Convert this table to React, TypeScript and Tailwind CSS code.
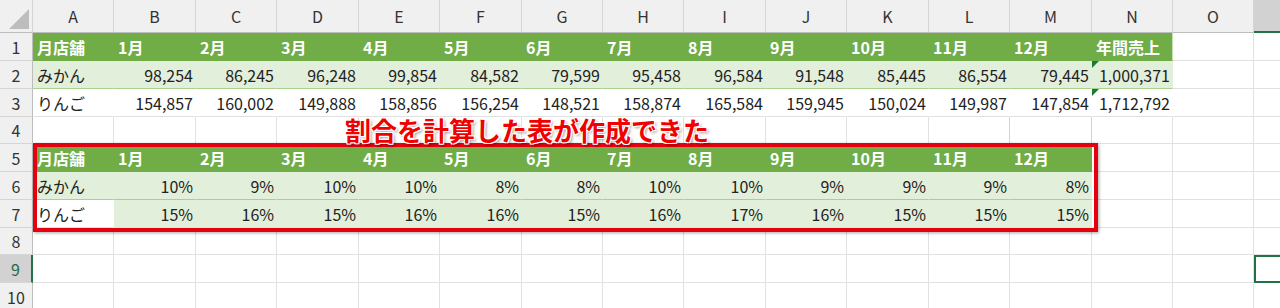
import React from 'react';

const letters = ['A', 'B', 'C', 'D', 'E', 'F', 'G', 'H', 'I', 'J', 'K', 'L', 'M', 'N', 'O', 'P'];
const months = ['1月', '2月', '3月', '4月', '5月', '6月', '7月', '8月', '9月', '10月', '11月', '12月'];

const mikan = ['98,254', '86,245', '96,248', '99,854', '84,582', '79,599', '95,458', '96,584', '91,548', '85,445', '86,554', '79,445'];
const ringo = ['154,857', '160,002', '149,888', '158,856', '156,254', '148,521', '158,874', '165,584', '159,945', '150,024', '149,987', '147,854'];
const mikanPct = ['10%', '9%', '10%', '10%', '8%', '8%', '10%', '10%', '9%', '9%', '9%', '8%'];
const ringoPct = ['15%', '16%', '15%', '16%', '16%', '15%', '16%', '17%', '16%', '15%', '15%', '15%'];

type Cell = { text?: string; kind: 'plain' | 'head' | 'light' | 'white'; right?: boolean; flag?: boolean };

// r = 1..10, c = 0..15 (A..P)
const getCell = (r: number, c: number): Cell => {
    if (r === 1) {
        if (c === 0) return { text: '月店舗', kind: 'head' };
        if (c <= 12) return { text: months[c - 1], kind: 'head' };
        if (c === 13) return { text: '年間売上', kind: 'head' };
    }
    if (r === 2) {
        if (c === 0) return { text: 'みかん', kind: 'light' };
        if (c <= 12) return { text: mikan[c - 1], kind: 'light', right: true };
        if (c === 13) return { text: '1,000,371', kind: 'light', right: true, flag: true };
    }
    if (r === 3) {
        if (c === 0) return { text: 'りんご', kind: 'white' };
        if (c <= 12) return { text: ringo[c - 1], kind: 'white', right: true };
        if (c === 13) return { text: '1,712,792', kind: 'white', right: true, flag: true };
    }
    if (r === 5) {
        if (c === 0) return { text: '月店舗', kind: 'head' };
        if (c <= 12) return { text: months[c - 1], kind: 'head' };
    }
    if (r === 6) {
        if (c === 0) return { text: 'みかん', kind: 'light' };
        if (c <= 12) return { text: mikanPct[c - 1], kind: 'light', right: true };
    }
    if (r === 7) {
        if (c === 0) return { text: 'りんご', kind: 'white' };
        if (c <= 12) return { text: ringoPct[c - 1], kind: 'light', right: true };
    }
    return { kind: 'plain' };
};

const cellClass = (r: number, c: number, cell: Cell) => {
    const base = 'relative box-border border-r border-b flex items-center whitespace-nowrap overflow-visible text-[16px] leading-none';
    let tone = 'bg-white border-r-[#E1E1E1] border-b-[#E1E1E1] text-[#222]';
    if (cell.kind === 'head') tone = 'bg-[#70AD47] border-r-[#70AD47] border-b-[#70AD47] text-white font-bold';
    if (cell.kind === 'light') tone = 'bg-[#E2EFDA] border-r-[#E2EFDA] border-b-[#A9D08E] text-[#222]';
    if (cell.kind === 'white') tone = 'bg-white border-r-white border-b-[#E1E1E1] text-[#222]';
    if (r === 7 && cell.kind === 'light') tone = 'bg-[#E2EFDA] border-r-[#E2EFDA] border-b-[#E1E1E1] text-[#222]';
    if (c === 13 && r <= 3) tone += ' border-r-[#C6E0B4]';
    if (c === 12 && r === 4) tone = 'bg-white border-r-[#C6E0B4] border-b-[#E1E1E1]';
    if (c === 11 && r === 4) tone = 'bg-white border-r-[#C6E0B4] border-b-[#E1E1E1]';
    const align = cell.right ? 'justify-end pr-[2px]' : 'justify-start pl-[4px]';
    return `${base} ${tone} ${align}`;
};

const RowHeader: React.FC<{ n: number }> = ({ n }) =>
    n === 9 ? (
        <div className="box-border border-b border-b-[#D5D5D5] border-r-2 border-r-[#217346] bg-[#D2D2D2] flex items-center justify-center text-[16px] text-[#1E6B41]">
            {n}
        </div>
    ) : (
        <div className="box-border border-b border-b-[#D5D5D5] border-r border-r-[#BDBDBD] bg-[#F0F0F0] flex items-center justify-center text-[16px] text-[#333]">
            {n}
        </div>
    );

export default function App() {
    const rows = [1, 2, 3, 4, 5, 6, 7, 8, 9, 10];
    return (
        <div className="relative w-[1280px] h-[308px] overflow-hidden bg-white font-['Noto_Sans_CJK_JP',sans-serif]">
            <div className="grid w-[1335px] grid-cols-[33px_81px_82px_81px_82px_81px_82px_81px_81px_82px_81px_82px_81px_82px_81px_81px_81px] grid-rows-[33px_28px_28px_28px_27px_28px_28px_28px_27px_28px_28px]">
                {/* ---------- column headers ---------- */}
                <div className="relative box-border border-r border-b border-r-[#D5D5D5] border-b-[#BDBDBD] bg-[#F0F0F0]">
                    <svg className="absolute right-[3px] bottom-[3px]" width="20" height="20" viewBox="0 0 20 20">
                        <polygon points="20,0 20,20 0,20" fill="#BDBDBD" />
                    </svg>
                </div>
                {letters.map((l) =>
                    l === 'P' ? (
                        <div key={l} className="box-border border-b-2 border-b-[#217346] bg-[#D2D2D2]" />
                    ) : (
                        <div
                            key={l}
                            className="box-border border-r border-b border-r-[#D5D5D5] border-b-[#BDBDBD] bg-[#F0F0F0] flex items-center justify-center text-[16px] text-[#333]"
                        >
                            {l}
                        </div>
                    )
                )}

                {/* ---------- rows ---------- */}
                {rows.map((r) => (
                    <React.Fragment key={r}>
                        <RowHeader n={r} />
                        {letters.map((l, c) => {
                            if (r === 9 && l === 'P') {
                                return <div key={l} className="box-border border-2 border-[#217346] bg-white" />;
                            }
                            const cell = getCell(r, c);
                            return (
                                <div key={l} className={cellClass(r, c, cell)}>
                                    {cell.flag && (
                                        <span className="absolute left-0 top-0 w-0 h-0 border-t-[7px] border-r-[7px] border-t-[#1B7A34] border-r-transparent" />
                                    )}
                                    {cell.text}
                                </div>
                            );
                        })}
                    </React.Fragment>
                ))}
            </div>

            {/* ---------- annotation ---------- */}
            <div className="absolute left-[33px] top-[143px] w-[1065px] h-[89px] border-4 border-[#E3000F] shadow-[1px_1px_3px_rgba(0,0,0,0.35)] pointer-events-none" />
            <div className="absolute left-[345px] top-[117px] text-[26px] leading-none font-bold text-[#F00000] whitespace-nowrap [text-shadow:1px_1px_0_#fff,-1px_-1px_0_#fff,1px_-1px_0_#fff,-1px_1px_0_#fff,2px_2px_3px_rgba(0,0,0,0.4)]">
                割合を計算した表が作成できた
            </div>
        </div>
    );
}
